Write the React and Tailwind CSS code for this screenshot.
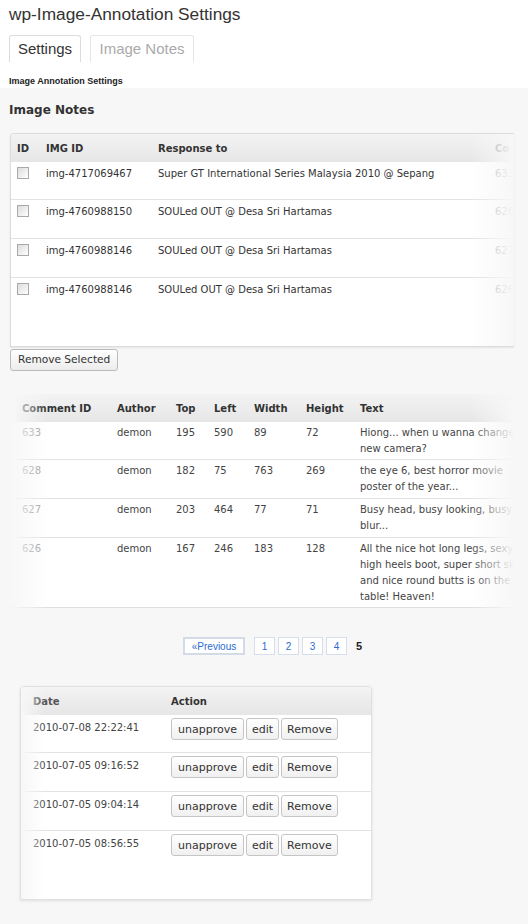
import React from "react";

const notes = [
  { img: "img-4717069467", to: "Super GT International Series Malaysia 2010 @ Sepang", cid: "633" },
  { img: "img-4760988150", to: "SOULed OUT @ Desa Sri Hartamas", cid: "628" },
  { img: "img-4760988146", to: "SOULed OUT @ Desa Sri Hartamas", cid: "627" },
  { img: "img-4760988146", to: "SOULed OUT @ Desa Sri Hartamas", cid: "626" },
];

const comments = [
  { id: "633", author: "demon", top: "195", left: "590", width: "89", height: "72", text: "Hiong... when u wanna change new camera?" },
  { id: "628", author: "demon", top: "182", left: "75", width: "763", height: "269", text: "the eye 6, best horror movie poster of the year..." },
  { id: "627", author: "demon", top: "203", left: "464", width: "77", height: "71", text: "Busy head, busy looking, busy blur..." },
  { id: "626", author: "demon", top: "167", left: "246", width: "183", height: "128", text: "All the nice hot long legs, sexy high heels boot, super short skirt and nice round butts is on the table! Heaven!" },
];

const dates = ["2010-07-08 22:22:41", "2010-07-05 09:16:52", "2010-07-05 09:04:14", "2010-07-05 08:56:55"];

// row heights shared by the three tables (last row fills the rest)
const rowH = ["h-[38px]", "h-[39px]", "h-[39px]"];

const Checkbox = () => (
  <span className="block w-[12px] h-[12px] border border-[#a9a9a9] bg-gradient-to-br from-[#dcdcdc] to-white" />
);

const Btn = ({ children, wide }) => (
  <button
    className={`h-[22px] ${wide ? "px-[6px]" : "px-[5px]"} border border-[#c5c5c5] rounded-[3px] bg-gradient-to-b from-white to-[#f0f0f0] text-[11px] text-[#333] leading-none`}
  >
    {children}
  </button>
);

const header = "h-[28px] bg-gradient-to-b from-[#f3f3f3] to-[#e6e6e6] font-bold text-[#333]";

export default function App() {
  return (
    <div className="w-[528px] min-h-[924px] bg-[#f7f7f7] font-['DejaVu_Sans',Verdana,sans-serif] text-[10px] text-[#333]">
      <div className="bg-white h-[88px] px-[9px] pt-[3px]">
        <h1 className="font-['Liberation_Sans',Arial,sans-serif] text-[17.3px] leading-[22px] text-[#333]">
          wp-Image-Annotation Settings
        </h1>
        <div className="flex gap-[9px] mt-[10px] font-['Liberation_Sans',Arial,sans-serif] text-[15px]">
          <div className="w-[72px] h-[27px] flex items-center justify-center border border-b-0 border-[#dcdcdc] rounded-t-[3px] text-[#333]">
            Settings
          </div>
          <div className="w-[104px] h-[27px] flex items-center justify-center border border-b-0 border-[#e6e6e6] rounded-t-[3px] text-[#aaa]">
            Image Notes
          </div>
        </div>
        <p className="mt-[14px] font-['Liberation_Sans',Arial,sans-serif] text-[9px] leading-[10px] font-bold text-[#222]">
          Image Annotation Settings
        </p>
      </div>

      <div className="px-[9px]">
        <h2 className="pt-[14px] text-[12px] leading-[16px] font-bold text-[#333]">Image Notes</h2>

        {/* image notes table */}
        <div className="relative mt-[15px] ml-[1px] w-[504px] h-[214px] flex flex-col overflow-hidden bg-white border border-[#dcdcdc] border-r-0 rounded-tl-[4px] shadow-[0_1px_2px_rgba(0,0,0,0.08)]">
          <div className={`grid grid-cols-[29px_112px_337px_120px] items-center shrink-0 ${header}`}>
            <span className="pl-[6px]">ID</span>
            <span className="pl-[6px]">IMG ID</span>
            <span className="pl-[6px]">Response to</span>
            <span className="pl-[6px] whitespace-nowrap text-[#999]">Co</span>
          </div>
          {notes.map((n, i) => (
            <div
              key={i}
              className={`grid grid-cols-[29px_112px_337px_120px] pt-[4px] leading-[15px] ${
                i < 3 ? `${rowH[i]} border-b border-[#e2e2e2]` : "flex-1"
              }`}
            >
              <span className="pl-[6px] pt-[1px]"><Checkbox /></span>
              <span className="pl-[6px]">{n.img}</span>
              <span className="pl-[6px] whitespace-nowrap">{n.to}</span>
              <span className="pl-[6px] text-[#aaa]">{n.cid}</span>
            </div>
          ))}
          <div className="absolute right-0 top-0 bottom-0 w-[44px] bg-gradient-to-r from-[#f7f7f7]/0 to-[#f7f7f7]" />
        </div>

        <button className="mt-[2px] ml-[1px] h-[22px] px-[7px] border border-[#bbb] rounded-[3px] bg-gradient-to-b from-white to-[#ececec] text-[10.6px] text-[#333]">
          Remove Selected
        </button>

        {/* comments table */}
        <div className="relative mt-[23px] ml-[1px] w-[504px] h-[214px] flex flex-col overflow-hidden">
          <div className={`ml-[5px] grid grid-cols-[95px_59px_38px_40px_52px_54px_186px] items-center shrink-0 ${header}`}>
            {["Comment ID", "Author", "Top", "Left", "Width", "Height", "Text"].map((h) => (
              <span key={h} className="pl-[7px] whitespace-nowrap">{h}</span>
            ))}
          </div>
          <div className="flex-1 flex flex-col bg-white border-b border-[#dedede] shadow-[0_1px_2px_rgba(0,0,0,0.06)]">
            {comments.map((c, i) => (
              <div
                key={c.id}
                className={`ml-[5px] grid grid-cols-[95px_59px_38px_40px_52px_54px_186px] pt-[3px] leading-[16px] text-[#444] ${
                  i < 3 ? `${rowH[i]} border-b border-[#e2e2e2]` : "flex-1"
                }`}
              >
                <span className="pl-[7px] text-[#999]">{c.id}</span>
                <span className="pl-[7px]">{c.author}</span>
                <span className="pl-[7px]">{c.top}</span>
                <span className="pl-[7px]">{c.left}</span>
                <span className="pl-[7px]">{c.width}</span>
                <span className="pl-[7px]">{c.height}</span>
                <span className="px-[7px]">{c.text}</span>
              </div>
            ))}
          </div>
          <div className="absolute left-0 top-0 bottom-0 w-[38px] bg-gradient-to-r from-[#f7f7f7] to-[#f7f7f7]/0" />
          <div className="absolute right-0 top-0 bottom-0 w-[44px] bg-gradient-to-r from-[#f7f7f7]/0 to-[#f7f7f7]" />
        </div>

        {/* pagination */}
        <div className="mt-[29px] ml-[174px] flex items-center font-['Liberation_Sans',Arial,sans-serif] text-[10px] text-[#2a6bd1]">
          <span className="w-[62px] h-[18px] flex items-center justify-center border-2 border-[#d3dce6] bg-white">
            «Previous
          </span>
          <div className="ml-[9px] flex gap-[3px]">
            {["1", "2", "3", "4"].map((p) => (
              <span key={p} className="w-[21px] h-[18px] flex items-center justify-center border border-[#d6dfe9] bg-white">
                {p}
              </span>
            ))}
          </div>
          <span className="ml-[9px] font-bold text-[11px] text-[#222]">5</span>
        </div>

        {/* approval table */}
        <div className="relative mt-[31px] ml-[11px] w-[352px] h-[214px] flex flex-col overflow-hidden bg-white border border-[#e0e0e0] rounded-t-[4px] shadow-[0_1px_3px_rgba(0,0,0,0.1)]">
          <div className={`grid grid-cols-[143px_1fr] items-center shrink-0 ${header}`}>
            <span className="pl-[12px] text-[#555]">Date</span>
            <span className="pl-[7px]">Action</span>
          </div>
          {dates.map((d, i) => (
            <div
              key={d}
              className={`grid grid-cols-[143px_1fr] ${i < 3 ? `${rowH[i]} border-b border-[#e2e2e2]` : "flex-1"}`}
            >
              <span className="pl-[12px] pt-[5px] leading-[15px] text-[#444]">{d}</span>
              <div className="pl-[7px] pt-[3px] flex gap-[2px] items-start">
                <Btn wide>unapprove</Btn>
                <Btn>edit</Btn>
                <Btn>Remove</Btn>
              </div>
            </div>
          ))}
          <div className="absolute left-0 top-0 bottom-0 w-[24px] bg-gradient-to-r from-[#f7f7f7] to-[#f7f7f7]/0" />
        </div>
      </div>
    </div>
  );
}
